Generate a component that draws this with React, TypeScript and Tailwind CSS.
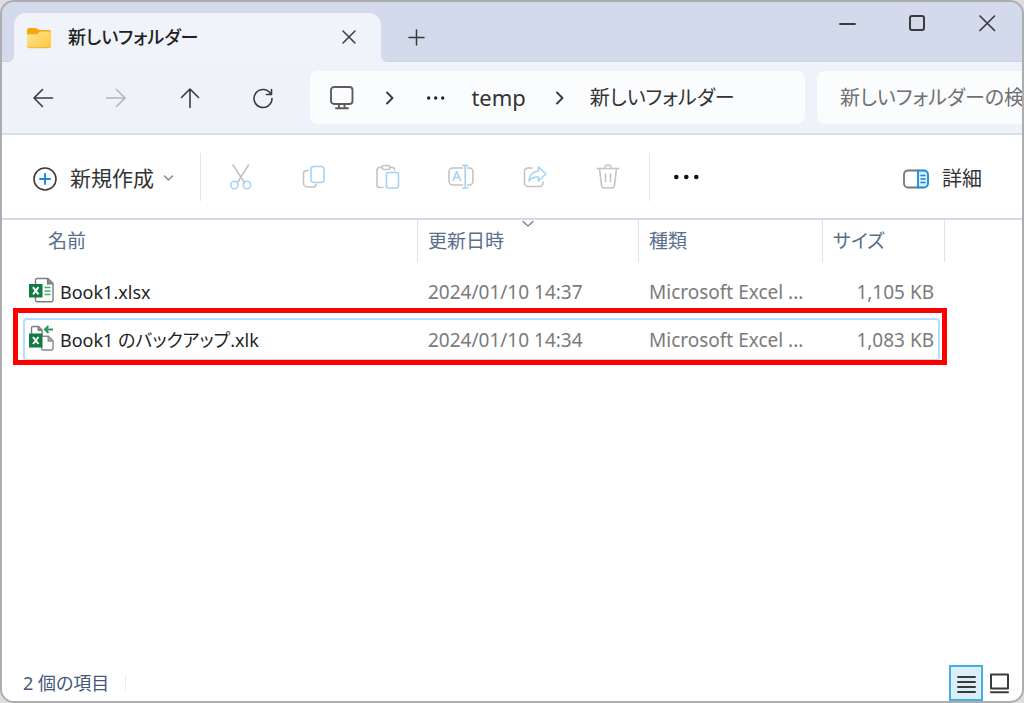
import type { ReactNode } from "react";

const INK = "#3b3b3b";
const DIM = "#c4c4c4";
const SKY = "#a5d3f5";
const BLUE = "#1b87dc";

type SvgProps = { w?: number; h?: number; stroke?: string; sw?: number; children: ReactNode };

function Svg({ w = 28, h = 28, stroke = INK, sw = 1.6, children }: SvgProps) {
  return (
    <svg
      aria-hidden="true"
      className="shrink-0"
      width={w}
      height={h}
      viewBox={`0 0 ${w} ${h}`}
      fill="none"
      stroke={stroke}
      strokeWidth={sw}
      strokeLinecap="round"
      strokeLinejoin="round"
    >
      {children}
    </svg>
  );
}

function FolderIcon() {
  return (
    <svg aria-hidden="true" className="shrink-0" width="26" height="22" viewBox="0 0 26 22">
      <defs>
        <linearGradient id="folder" x1="0" y1="0" x2="1" y2="1">
          <stop offset="0" stopColor="#ffe596" />
          <stop offset="1" stopColor="#fcc83a" />
        </linearGradient>
      </defs>
      <path d="M1 3a2 2 0 0 1 2-2h6.500a2 2 0 0 1 1.500.6L13 3h10a2 2 0 0 1 2 2v8H1z" fill="#f2a90d" />
      <path d="M1 7.200h9.500a2 2 0 0 0 1.500-.7l1.300-1.300a2 2 0 0 1 1.500-.7H23a2 2 0 0 1 2 2V19a2 2 0 0 1-2 2H3a2 2 0 0 1-2-2z" fill="url(#folder)" />
      <path d="M1.300 19.200A2 2 0 0 0 3 20.700h20a2 2 0 0 0 1.700-1.500" fill="none" stroke="#e9b02c" strokeWidth=".8" />
    </svg>
  );
}

function XlsxIcon() {
  return (
    <svg aria-hidden="true" className="shrink-0" width="26" height="26" viewBox="0 0 26 26" fill="none">
      <path d="M7.500 7V3Q7.500 1.500 9 1.500H20L25 6.500V23Q25 24.700 23.500 24.700H9Q7.500 24.700 7.500 23V20" fill="#fff" stroke="#7d7d7d" strokeWidth="1.400" />
      <path d="M19.500 1.500V7H25" fill="#8a8a8a" stroke="#7d7d7d" strokeWidth="1.200" />
      <path d="M16.500 10.500H22.500M16.500 14H22.500M16.500 17.500H22.500" stroke="#37b277" strokeWidth="1.600" />
      <rect x="1" y="7" width="13.500" height="13.500" fill="#107c41" />
      <path d="M5 10.200L10.500 17.300M10.500 10.200L5 17.300" stroke="#fff" strokeWidth="2" />
    </svg>
  );
}

function XlkIcon() {
  return (
    <svg aria-hidden="true" className="shrink-0" width="26" height="26" viewBox="0 0 26 26" fill="none">
      <path d="M3.500 9V3Q3.500 1.500 5 1.500H10.500L14 5V10" fill="#fff" stroke="#7d7d7d" strokeWidth="1.400" />
      <path d="M10 1.500V5.500H14" fill="#8a8a8a" stroke="#7d7d7d" />
      <path d="M14 11.200H20.500L25 15.700V23.500Q25 25 23.500 25H15Q13.500 25 13.500 23.500V22" fill="#fff" stroke="#8a8a8a" strokeWidth="1.400" />
      <path d="M20 11.200V16.200H25" fill="#a5a5a5" stroke="#8a8a8a" />
      <rect x="1" y="8.500" width="13.500" height="14" fill="#107c41" />
      <path d="M5 12L10.500 19M10.500 12L5 19" stroke="#fff" strokeWidth="2" />
      <path d="M25 4.500H18M20.500 1L17 4.500L20.500 8" stroke="#1f9a5a" strokeWidth="2" />
    </svg>
  );
}

function Chevron() {
  return (
    <Svg w={12} h={18} sw={1.900}>
      <path d="M3 3.500L8.500 9L3 14.500" />
    </Svg>
  );
}

function Dots({ r, gap, color }: { r: number; gap: number; color: string }) {
  const w = gap * 2 + r * 2 + 2;
  return (
    <svg aria-hidden="true" className="shrink-0" width={w} height="8" viewBox={`0 0 ${w} 8`} fill={color}>
      {[0, 1, 2].map((i) => (
        <circle key={i} cx={r + 1 + i * gap} cy="4" r={r} />
      ))}
    </svg>
  );
}

const navigation = [
  { label: "戻る", dim: false, d: "M23.500 14H5.500M13.500 5.500L5 14L13.500 22.500" },
  { label: "進む", dim: true, d: "M4.500 14H22.500M14.500 5.500L23 14L14.500 22.500" },
  { label: "上へ", dim: false, d: "M14 23.500V5.500M5.500 13.500L14 5L22.500 13.500" },
  { label: "更新", dim: false, d: "M21.500 9.500A9 9 0 1 0 23 14.500M22.500 5.500V10.500H17.500" },
];

const commands = [
  {
    label: "切り取り",
    icon: (
      <>
        <path d="M6 2L17.500 19.500M21.500 2L10.500 19.500" />
        <circle cx="7.500" cy="22" r="3.700" stroke={SKY} />
        <circle cx="20" cy="22" r="3.700" stroke={SKY} />
      </>
    ),
  },
  {
    label: "コピー",
    icon: (
      <>
        <path d="M8 7.500H6.500A3 3 0 0 0 3.500 10.500V20A4 4 0 0 0 7.500 24H13A3 3 0 0 0 16 21.500" />
        <rect x="11" y="3.500" width="13" height="16" rx="3" stroke={SKY} />
      </>
    ),
  },
  {
    label: "貼り付け",
    icon: (
      <>
        <path d="M8 4.500H5.500A2.500 2.500 0 0 0 3 7V22A2.500 2.500 0 0 0 5.500 24.500H9M16 4.500H18.500Q20.500 4.500 20.500 7" />
        <rect x="8" y="2.500" width="8" height="4" rx="2" />
        <rect x="12.500" y="9.500" width="12" height="15.500" rx="2" stroke={SKY} />
      </>
    ),
  },
  {
    label: "名前の変更",
    icon: (
      <>
        <path d="M15.500 5H6A4 4 0 0 0 2 9V18A4 4 0 0 0 6 22H15.500M20.500 5H22A4 4 0 0 1 26 9V18A4 4 0 0 1 22 22H20.500" />
        <path d="M6 17.500L9.800 8.500L13.600 17.500M7.500 14.500H12M15.500 2.500H21M15.500 25H21M18.200 2.500V25" stroke={SKY} />
      </>
    ),
  },
  {
    label: "共有",
    icon: (
      <>
        <path d="M11 5H7A3.500 3.500 0 0 0 3.500 8.500V20A3.500 3.500 0 0 0 7 23.500H18.500A3.500 3.500 0 0 0 22 20V19" />
        <path d="M17.500 4L25 11L17.500 18V14Q11.500 13.500 8 18Q8.500 9 17.500 8Z" stroke={SKY} />
      </>
    ),
  },
  {
    label: "削除",
    icon: (
      <>
        <path d="M3.500 5.500H24.500M10.500 5.500A3.500 3.500 0 0 1 17.500 5.500M5.500 5.500L7.500 22A3 3 0 0 0 10.500 25H17.500A3 3 0 0 0 20.500 22L22.500 5.500M11.500 11V18.500M16.500 11V18.500" />
      </>
    ),
  },
];

const files = [
  { name: "Book1.xlsx", date: "2024/01/10 14:37", type: "Microsoft Excel ...", size: "1,105 KB", icon: <XlsxIcon />, marked: false },
  { name: "Book1 のバックアップ.xlk", date: "2024/01/10 14:34", type: "Microsoft Excel ...", size: "1,083 KB", icon: <XlkIcon />, marked: true },
];

function TitleBar() {
  return (
    <header className="flex h-[60px] items-end border-b border-[#cad4e6] bg-[#d2daeb]">
      <div className="relative -mb-px ml-3 flex h-[49px] w-[367px] items-center rounded-t-xl bg-[#f0f3f9] pr-5 pl-3">
        <svg aria-hidden="true" className="absolute right-full bottom-0" width="6" height="6" viewBox="0 0 6 6">
          <path d="M6 0V6H0A6 6 0 0 0 6 0Z" fill="#f0f3f9" />
        </svg>
        <svg aria-hidden="true" className="absolute bottom-0 left-full" width="6" height="6" viewBox="0 0 6 6">
          <path d="M0 0V6H6A6 6 0 0 1 0 0Z" fill="#f0f3f9" />
        </svg>
        <FolderIcon />
        <span className="ml-4 flex-1 text-[18px] font-medium text-[#202020]">新しいフォルダー</span>
        <button aria-label="タブを閉じる" className="flex">
          <Svg w={24} h={24} sw={1.500}>
            <path d="M6 5L18 17M18 5L6 17" />
          </Svg>
        </button>
      </div>
      <button aria-label="新しいタブ" className="mb-3 ml-6 flex">
        <Svg w={24} h={24} sw={1.500}>
          <path d="M11.500 5V20M4 12.500H19" />
        </Svg>
      </button>
      <div className="flex-1" />
      <div className="flex items-center self-start pt-2">
        <button aria-label="最小化" className="flex w-[70px] justify-center">
          <Svg sw={1.900}><path d="M7 14H22" /></Svg>
        </button>
        <button aria-label="最大化" className="flex w-[70px] justify-center">
          <Svg sw={2}><rect x="7" y="6" width="14" height="14" rx="2" /></Svg>
        </button>
        <button aria-label="閉じる" className="flex w-[70px] justify-center">
          <Svg sw={1.700}><path d="M7 6L21.500 20.500M21.500 6L7 20.500" /></Svg>
        </button>
      </div>
    </header>
  );
}

function NavigationBar() {
  return (
    <div className="flex h-[73px] items-center border-b-2 border-[#d8deeb] bg-[#eff3f9] pl-1">
      <nav aria-label="ナビゲーション" className="grid w-[294px] shrink-0 grid-cols-4">
        {navigation.map((n) => (
          <button key={n.label} aria-label={n.label} disabled={n.dim} className="flex justify-center">
            <Svg stroke={n.dim ? "#b4b7bc" : INK}>
              <path d={n.d} />
            </Svg>
          </button>
        ))}
      </nav>
      <div className="ml-[10px] flex h-[53px] min-w-0 flex-1 items-center rounded-lg bg-[#fbfcfe] pl-[18px] text-[22px] whitespace-nowrap text-[#333333]">
        <Svg sw={1.900} stroke="#5c5c5c">
          <rect x="3" y="3" width="21.500" height="17" rx="3" />
          <path d="M11 20.500V23.500M16.500 20.500V23.500M8 24.200H20" />
        </Svg>
        <span className="ml-7 flex"><Chevron /></span>
        <button aria-label="上位のフォルダー" className="ml-[30px] flex">
          <Dots r={1.700} gap={7} color="#222222" />
        </button>
        <button className="ml-[26px]">temp</button>
        <span className="ml-7 flex"><Chevron /></span>
        <button className="ml-6 text-[20px]">新しいフォルダー</button>
      </div>
      <input
        type="text"
        aria-label="検索"
        placeholder="新しいフォルダーの検索"
        className="ml-3 h-[53px] w-[205px] shrink-0 rounded-l-lg bg-[#fbfcfe] pl-[23px] text-[20px] text-[#333333] outline-none placeholder:text-[#707070]"
      />
    </div>
  );
}

function CommandBar() {
  return (
    <div className="flex h-[85px] items-center border-b-2 border-[#d3dbe9] bg-white pl-[29px]">
      <button className="flex w-[169px] shrink-0 items-center pt-1 text-[21px] whitespace-nowrap text-[#333333]">
        <Svg>
          <circle cx="14" cy="14" r="11" />
          <path d="M14 9V19M9 14H19" stroke={BLUE} strokeWidth="1.900" />
        </Svg>
        <span className="ml-[11px] pt-px">新規作成</span>
        <span className="ml-2 flex">
          <Svg w={14} h={14} stroke="#8c8c8c"><path d="M2.500 4L6.500 8L10.500 4" /></Svg>
        </span>
      </button>
      <span className="h-12 w-px bg-[#e6e6e6]" />
      <div className="ml-[3px] grid w-[441px] shrink-0 grid-cols-6">
        {commands.map((c) => (
          <button key={c.label} aria-label={c.label} disabled className="flex justify-center">
            <Svg stroke={DIM}>{c.icon}</Svg>
          </button>
        ))}
      </div>
      <span className="ml-1 h-12 w-px bg-[#e6e6e6]" />
      <button aria-label="もっと見る" className="ml-[23px] flex">
        <Dots r={2.300} gap={10} color="#111111" />
      </button>
      <div className="flex-1" />
      <button className="mr-10 flex items-center pt-1 text-[20px] whitespace-nowrap text-[#333333]">
        <Svg w={28} h={22} sw={1.800}>
          <path d="M16 2.500H6A4 4 0 0 0 2 6.500V15.500A4 4 0 0 0 6 19.500H16" stroke="#777777" />
          <path d="M16 2.500H22A4 4 0 0 1 26 6.500V15.500A4 4 0 0 1 22 19.500H16Z" fill="#d9eefc" stroke={BLUE} />
          <path d="M19 7.500H23M19 11H23M19 14.500H23" stroke={BLUE} strokeWidth="1.500" />
        </Svg>
        <span className="ml-3 pt-px">詳細</span>
      </button>
    </div>
  );
}

function FileList() {
  return (
    <main className="flex-1 bg-white pr-[77px] pl-[21px]">
      <table className="w-full table-fixed border-separate border-spacing-0 text-[19px]">
        <colgroup>
          <col />
          <col className="w-[221px]" />
          <col className="w-[184px]" />
          <col className="w-[122px]" />
        </colgroup>
        <thead className="text-[#5a6e8c]">
          <tr className="h-[42px] text-left">
            <th scope="col" className="border-r border-[#e2e2e2] pl-[25px] font-normal">名前</th>
            <th scope="col" aria-sort="descending" className="relative border-r border-[#e2e2e2] pl-[10px] font-normal">
              更新日時
              <span className="absolute top-0 left-1/2 -translate-x-1/2">
                <Svg w={14} h={10} stroke="#8c8c8c"><path d="M2 1.500L7 6L12 1.500" /></Svg>
              </span>
            </th>
            <th scope="col" className="border-r border-[#e2e2e2] pl-[10px] font-normal">種類</th>
            <th scope="col" className="border-r border-[#e2e2e2] pl-[10px] font-normal">サイズ</th>
          </tr>
        </thead>
        <tbody className="whitespace-nowrap text-[#7b7b7b]">
          <tr aria-hidden="true" className="h-[6px]" />
          {files.map((f) => (
            <tr key={f.name} className="relative h-12">
              <td className="text-[18px] text-[#1f1f1f]">
                {f.marked && (
                  <>
                    <span className="pointer-events-none absolute top-[2px] right-[5px] left-0 h-[43px] rounded-sm border-2 border-[#b5dcfa]" />
                    <span className="pointer-events-none absolute -top-2 -right-[2px] -left-[10px] h-[57px] border-5 border-[#ff0000]" />
                  </>
                )}
                <div className="flex items-center gap-[6px] pl-[5px]">
                  <span className="pb-1">{f.icon}</span>
                  <span>{f.name}</span>
                </div>
              </td>
              <td className="pl-[10px]">{f.date}</td>
              <td className="pl-[10px]">{f.type}</td>
              <td className="pr-[11px] text-right">{f.size}</td>
            </tr>
          ))}
        </tbody>
      </table>
    </main>
  );
}

function StatusBar() {
  return (
    <footer className="flex h-9 items-center bg-white pr-[11px] pl-[21px] text-[18px] text-[#44597a]">
      <span>2 個の項目</span>
      <span className="ml-4 h-4 w-px bg-[#ececec]" />
      <div className="flex-1" />
      <button aria-label="詳細表示" aria-pressed="true" className="flex h-9 w-[34px] items-center justify-center border-2 border-[#42b0e2] bg-[#dbeffa]">
        <Svg w={22} h={22} sw={2}>
          <path d="M3 5H20M3 10H20M3 15H20M3 20H20" />
        </Svg>
      </button>
      <button aria-label="大アイコン表示" className="ml-1 flex">
        <Svg w={24} h={24} sw={2}>
          <rect x="4" y="3.500" width="17" height="14" />
          <path d="M4 21.200H21" />
        </Svg>
      </button>
    </footer>
  );
}

export default function App() {
  return (
    <div lang="ja" className="flex min-h-screen flex-col bg-[#dedede] font-['Noto_Sans','Noto_Sans_CJK_JP',sans-serif] [font-feature-settings:'palt']">
      <div className="flex flex-1 flex-col overflow-hidden rounded-[14px] border-2 border-[#adadad]">
        <TitleBar />
        <NavigationBar />
        <CommandBar />
        <FileList />
        <StatusBar />
      </div>
    </div>
  );
}
